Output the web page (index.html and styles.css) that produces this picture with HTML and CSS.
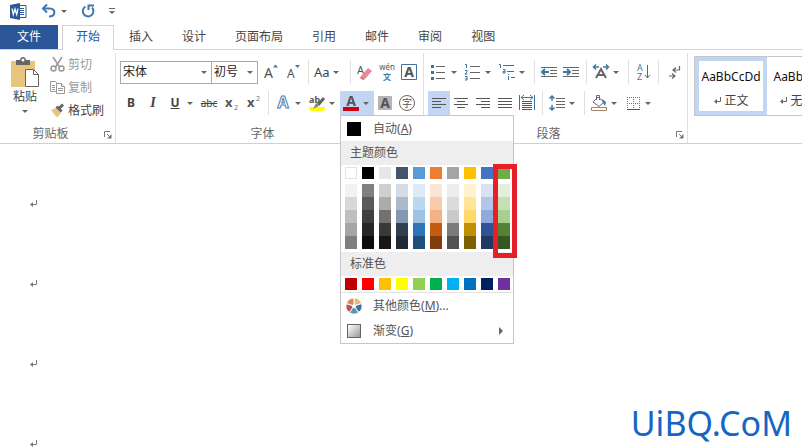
FILE: index.html
```html
<!DOCTYPE html>
<html lang="zh-CN">
<head>
    <meta charset="UTF-8">
    <meta name="viewport" content="width=device-width, initial-scale=1.0">
    <title>Word</title>
    <link rel="stylesheet" href="styles.css">
</head>
<body>
    <div class="quick-bar">
        <svg class="app-icon" width="17" height="17" viewBox="0 0 17 17">
            <path d="M9 2.5h7v12H9z" fill="#fff" stroke="#2b579a"/>
            <path d="M10 5.5h4M10 7.5h4M10 9.5h4M10 11.5h4" stroke="#2b579a"/>
            <path d="M0 2l10-2v17L0 15z" fill="#2b579a"/>
            <path d="M2 5.5l1.3 6L5 6l1.7 5.5 1.3-6" fill="none" stroke="#fff" stroke-width="1.3"/>
        </svg>
        <button class="quick-btn" aria-label="撤消">
            <svg width="16" height="14" viewBox="0 0 16 14">
                <path d="M2 4.5h7c6 0 6 8-1 8" fill="none" stroke="#3f78b0" stroke-width="2"/>
                <path d="M6 .5l-4 4 4 4" fill="none" stroke="#3f78b0" stroke-width="2"/>
            </svg>
            <span class="caret"></span>
        </button>
        <button class="quick-btn" aria-label="重复">
            <svg width="14" height="14" viewBox="0 0 14 14">
                <path d="M4.5 2.5A5.3 5.3 0 1 0 11 3.5" fill="none" stroke="#3f78b0" stroke-width="2"/>
                <path d="M7.5 6V1.5H13" fill="none" stroke="#3f78b0" stroke-width="2"/>
            </svg>
        </button>
        <button class="quick-btn" aria-label="自定义快速访问工具栏">
            <svg width="6" height="7" viewBox="0 0 6 7"><path d="M0 .5h6" stroke="#666"/><path d="M0 3h6L3 6z" fill="#666"/></svg>
        </button>
    </div>

    <nav class="tabs">
        <a class="tab tab-file" href="#">文件</a>
        <a class="tab tab-active" href="#">开始</a>
        <a class="tab" href="#">插入</a>
        <a class="tab" href="#">设计</a>
        <a class="tab" href="#">页面布局</a>
        <a class="tab" href="#">引用</a>
        <a class="tab" href="#">邮件</a>
        <a class="tab" href="#">审阅</a>
        <a class="tab" href="#">视图</a>
    </nav>

    <div class="ribbon">
        <!-- 剪贴板 -->
        <section class="group">
            <div class="clipboard">
                <button class="paste">
                    <svg width="30" height="32" viewBox="0 0 30 32">
                        <path d="M1 4h24v26H1z" fill="#e9c47c"/>
                        <path d="M6 3h4c0-4 6-4 6 0h4v5H6z" fill="#666"/>
                        <circle cx="13" cy="3" r="1.5" fill="#fff"/>
                        <path d="M15.5 12.5h8l5 5v12h-13z" fill="#fff" stroke="#666"/>
                        <path d="M23.5 12.5v5h5" fill="none" stroke="#666"/>
                    </svg>
                    <span>粘贴</span>
                    <span class="caret"></span>
                </button>
                <div class="clip-list">
                    <button class="clip-btn" disabled>
                        <svg width="15" height="15" viewBox="0 0 15 15" fill="none" stroke="#999" stroke-width="1.5">
                            <path d="M3 0l6.5 10M12 0L5.5 10"/>
                            <circle cx="3.5" cy="11.5" r="2.5"/><circle cx="11.5" cy="11.5" r="2.5"/>
                        </svg>
                        剪切
                    </button>
                    <button class="clip-btn" disabled>
                        <svg width="15" height="15" viewBox="0 0 15 15" fill="#fff" stroke="#999">
                            <path d="M.5 1.5h5l3 3v7h-8z"/>
                            <path d="M2 5.5h3M2 7.5h3M2 9.5h3"/>
                            <path d="M6.5 3.5h5l3 3v7h-8z"/>
                            <path d="M11.5 3.5v3h3M8 8.5h5M8 10.5h5"/>
                        </svg>
                        复制
                    </button>
                    <button class="clip-btn">
                        <svg width="15" height="15" viewBox="0 0 15 15">
                            <path d="M1 7l5-2 5 5-4 4.5z" fill="#e9c47c"/>
                            <path d="M5.5 4.5l2-2 5 5-2 2z" fill="#666"/>
                            <path d="M9.5 5L13 1.5" stroke="#666" stroke-width="3"/>
                        </svg>
                        格式刷
                    </button>
                </div>
            </div>
            <div class="group-label">
                <span>剪贴板</span>
                <button class="launcher" aria-label="剪贴板设置"><svg width="8" height="8" viewBox="0 0 8 8"><path d="M.5 6V.5H6M3 3l3 3" fill="none" stroke="#777"/><path d="M7.5 3v4.5H3z" fill="#777"/></svg></button>
            </div>
        </section>

        <!-- 字体 -->
        <section class="group">
            <div class="tool-rows">
                <div class="tool-row">
                    <div class="combos">
                        <span class="combo combo-font"><select aria-label="字体"><option>宋体</option></select></span>
                        <span class="combo combo-size"><select aria-label="字号"><option>初号</option></select></span>
                    </div>
                    <button class="tool" aria-label="增大字号"><svg class="ico" viewBox="0 0 18 18"><text x="2" y="15" font-size="14">A</text><path d="M11 4.5h5l-2.5-3z" fill="#3f78a0"/></svg></button>
                    <button class="tool" aria-label="减小字号"><svg class="ico" viewBox="0 0 18 18"><text x="3" y="15" font-size="12">A</text><path d="M11 2h5l-2.5 3z" fill="#3f78a0"/></svg></button>
                    <span class="sep"></span>
                    <button class="tool split text-tool"><span>Aa</span><span class="caret"></span></button>
                    <span class="sep"></span>
                    <button class="tool" aria-label="清除格式">
                        <svg class="ico" viewBox="0 0 18 18"><text x="1" y="11" font-size="11">A</text><path d="M5 13l7-8 4 3-7 8z" fill="#e58a98"/><path d="M5 13l4 3-2 1-3-2z" fill="#d46a7c"/></svg>
                    </button>
                    <button class="tool" aria-label="拼音指南"><svg class="ico" viewBox="0 0 18 18"><text x="9" y="7" font-size="8" text-anchor="middle">wén</text><text class="blue bold" x="9" y="17" font-size="8" text-anchor="middle">文</text></svg></button>
                    <button class="tool" aria-label="字符边框"><svg class="ico" viewBox="0 0 18 18"><path d="M1.5 1.5h15v15h-15z" fill="none" stroke="#41719c"/><text class="bold" x="9" y="14" font-size="14" text-anchor="middle">A</text></svg></button>
                </div>
                <div class="tool-row">
                    <button class="tool bold">B</button>
                    <button class="tool italic">I</button>
                    <button class="tool split bold"><u>U</u><span class="caret"></span></button>
                    <button class="tool strike">abc</button>
                    <button class="tool" aria-label="下标"><svg class="ico" viewBox="0 0 18 18"><text class="bold" x="3" y="13" font-size="13">x</text><text class="blue" x="12" y="16" font-size="7">2</text></svg></button>
                    <button class="tool" aria-label="上标"><svg class="ico" viewBox="0 0 18 18"><text class="bold" x="3" y="13" font-size="13">x</text><text class="blue" x="12" y="7" font-size="7">2</text></svg></button>
                    <span class="sep"></span>
                    <button class="tool split" aria-label="文本效果"><svg class="ico" viewBox="0 0 18 18"><text class="glow" x="9" y="14" font-size="16" text-anchor="middle">A</text></svg><span class="caret"></span></button>
                    <button class="tool split" aria-label="突出显示"><svg class="ico" viewBox="0 0 18 18"><path d="M1 13h16v2l-2 2H3l-2-2z" fill="#ffff00"/><text class="bold" x="1" y="9" font-size="9">ab</text><path d="M16 4l-6 7" stroke="#666" stroke-width="3"/><path d="M8 9l3 3-6 3z" fill="#888"/></svg><span class="caret"></span></button>
                    <div class="menu-host">
                        <button class="tool split pressed" aria-label="字体颜色"><svg class="ico" viewBox="0 0 18 18"><text class="bold" x="9" y="12" font-size="14" text-anchor="middle">A</text><path d="M1 13h16v4H1z" fill="#d0000c"/></svg><span class="caret"></span></button>
                        <div class="menu">
                            <button class="menu-item"><span class="auto-color"></span><span>自动(<u>A</u>)</span></button>
                            <div class="menu-title">主题颜色</div>
                            <div class="swatches" id="theme-colors"></div>
                            <div class="swatches shades" id="theme-shades"></div>
                            <div class="menu-title">标准色</div>
                            <div class="swatches standard" id="standard-colors"></div>
                            <button class="menu-item">
                                <svg width="16" height="16" viewBox="0 0 16 16" stroke="#fff">
                                    <path d="M8 8V0a8 8 0 0 1 7.6 5.5z" fill="#ecb87c"/>
                                    <path d="M8 8l7.6-2.5a8 8 0 0 1-2.9 9z" fill="#41719c"/>
                                    <path d="M8 8l4.7 6.5a8 8 0 0 1-9.4 0z" fill="#5b9aa8"/>
                                    <path d="M8 8l-4.7 6.5a8 8 0 0 1-2.9-9z" fill="#b5535a"/>
                                    <path d="M8 8L.4 5.5A8 8 0 0 1 8 0z" fill="#dc8a5c"/>
                                    <circle cx="8" cy="8" r="1.5" fill="#fff"/>
                                </svg>
                                <span>其他颜色(<u>M</u>)...</span>
                            </button>
                            <button class="menu-item"><span class="gradient-icon"></span><span>渐变(<u>G</u>)</span><span class="submenu-arrow"></span></button>
                            <div class="marker"></div>
                        </div>
                    </div>
                    <button class="tool" aria-label="字符底纹"><svg class="ico" viewBox="0 0 18 18"><path d="M2 2h14v14H2z" fill="#b4b4b4"/><text class="bold" x="9" y="14" font-size="14" text-anchor="middle">A</text></svg></button>
                    <button class="tool" aria-label="带圈字符"><svg class="ico" viewBox="0 0 18 18"><circle cx="9" cy="9" r="7.5" fill="none" stroke="#666"/><text x="9" y="13" font-size="10" text-anchor="middle">字</text></svg></button>
                </div>
            </div>
            <div class="group-label">
                <span>字体</span>
                <button class="launcher" aria-label="字体设置"><svg width="8" height="8" viewBox="0 0 8 8"><path d="M.5 6V.5H6M3 3l3 3" fill="none" stroke="#777"/><path d="M7.5 3v4.5H3z" fill="#777"/></svg></button>
            </div>
        </section>

        <!-- 段落 -->
        <section class="group">
            <div class="tool-rows">
                <div class="tool-row">
                    <button class="tool split" aria-label="项目符号"><svg class="ico" viewBox="0 0 18 18"><path d="M6 3.5h9M6 9.5h9M6 15.5h9" stroke="#666"/><path d="M1 2h3v3H1zM1 8h3v3H1zM1 14h3v3H1z" fill="#41719c"/></svg><span class="caret"></span></button>
                    <button class="tool split" aria-label="编号"><svg class="ico" viewBox="0 0 18 18"><path d="M6 3.5h10M6 9.5h10M6 15.5h10" stroke="#666"/><path d="M1 1.5h1.5V5M1 7.5h2V9l-2 2h2.5M1 13.5h2V17H1M1.5 15.5H3" fill="none" stroke="#41719c"/></svg><span class="caret"></span></button>
                    <button class="tool split" aria-label="多级列表"><svg class="ico" viewBox="0 0 18 18"><path d="M5 2.5h11M9 8.5h7M13 14.5h4" stroke="#666"/><path d="M1 1.5h1.5V5M5 6.5h2V10H5V8.5h2" fill="none" stroke="#41719c"/><path d="M10.5 11v1M10.5 13v4" stroke="#41719c"/></svg><span class="caret"></span></button>
                    <span class="sep"></span>
                    <button class="tool" aria-label="减少缩进量"><svg class="ico" viewBox="0 0 18 18"><path d="M1 4.5h16M10 7.5h7M10 10.5h7M1 13.5h16" stroke="#666"/><path d="M9 9H2M5 6L2 9l3 3" fill="none" stroke="#3f78a0" stroke-width="2"/></svg></button>
                    <button class="tool" aria-label="增加缩进量"><svg class="ico" viewBox="0 0 18 18"><path d="M1 4.5h16M10 7.5h7M10 10.5h7M1 13.5h16" stroke="#666"/><path d="M1 9h7M5 6l3 3-3 3" fill="none" stroke="#3f78a0" stroke-width="2"/></svg></button>
                    <span class="sep"></span>
                    <button class="tool split" aria-label="中文版式"><svg class="ico" viewBox="0 0 18 18"><path d="M4 15L9 6l5 9M6 12h6" fill="none" stroke="#666" stroke-width="2"/><path d="M7 4H2M4 1.5L1.5 4 4 6.5M11 4h5M14 1.5L16.5 4 14 6.5" fill="none" stroke="#3f78a0" stroke-width="1.5"/></svg><span class="caret"></span></button>
                    <span class="sep"></span>
                    <button class="tool" aria-label="排序"><svg class="ico" viewBox="0 0 18 18"><text class="blue" x="3" y="8" font-size="9">A</text><text class="purple" x="3" y="17" font-size="9">Z</text><path d="M13.5 2v13M11 12l2.5 3 2.5-3" fill="none" stroke="#666"/></svg></button>
                    <span class="sep"></span>
                    <button class="tool" aria-label="显示编辑标记"><svg class="ico" viewBox="0 0 18 18"><path d="M15.5 3v4H9M12 4.5L9 7l3 2.5M5 13h6M8 10.5l3 2.5-3 2.5" fill="none" stroke="#666" stroke-width="1.2"/></svg></button>
                </div>
                <div class="tool-row">
                    <button class="tool pressed" aria-label="左对齐"><svg class="ico" viewBox="0 0 18 18"><path d="M2 4.5h14M2 7.5h9M2 10.5h14M2 13.5h9" stroke="#555"/></svg></button>
                    <button class="tool" aria-label="居中"><svg class="ico" viewBox="0 0 18 18"><path d="M2 4.5h14M5 7.5h8M2 10.5h14M5 13.5h8" stroke="#555"/></svg></button>
                    <button class="tool" aria-label="右对齐"><svg class="ico" viewBox="0 0 18 18"><path d="M2 4.5h14M7 7.5h9M2 10.5h14M7 13.5h9" stroke="#555"/></svg></button>
                    <button class="tool" aria-label="两端对齐"><svg class="ico" viewBox="0 0 18 18"><path d="M2 4.5h14M2 7.5h14M2 10.5h14M2 13.5h14" stroke="#555"/></svg></button>
                    <button class="tool" aria-label="分散对齐"><svg class="ico" viewBox="0 0 18 18"><path d="M1.5 1v15M16.5 1v15" stroke="#41719c"/><path d="M3 3.5h12M6 1L3 3.5 6 6M12 1l3 2.5L12 6" fill="none" stroke="#3f78a0"/><path d="M4 7.5h10M4 9.5h10M4 11.5h10M4 13.5h10M4 15.5h10" stroke="#555"/></svg></button>
                    <span class="sep"></span>
                    <button class="tool split" aria-label="行距"><svg class="ico" viewBox="0 0 18 18"><path d="M8 4.5h9M8 7.5h9M8 10.5h9M8 13.5h9" stroke="#666"/><path d="M4 2v5M1.5 4.5L4 2l2.5 2.5M4 11v5M1.5 13.5L4 16l2.5-2.5" fill="none" stroke="#3f78a0" stroke-width="1.5"/></svg><span class="caret"></span></button>
                    <span class="sep"></span>
                    <button class="tool split" aria-label="底纹"><svg class="ico" viewBox="0 0 18 18"><path d="M1.5 13.5h15v3h-15z" fill="#fff" stroke="#a08468"/><path d="M3 8l5-5 6 5-5 4.5z" fill="#fff" stroke="#666"/><path d="M6.5 6V1.5h3V6" fill="none" stroke="#7c5c9c"/><path d="M12 5l4 3-1 4-2-3z" fill="#3f78a0"/></svg><span class="caret"></span></button>
                    <button class="tool split" aria-label="边框"><svg class="ico" viewBox="0 0 18 18"><path d="M3 3.5h13M3 9.5h13M3.5 3v13M9.5 3v13M15.5 3v13" stroke="#777" stroke-dasharray="1 1"/><path d="M3 15.5h13" stroke="#555"/></svg><span class="caret"></span></button>
                </div>
            </div>
            <div class="group-label">
                <span>段落</span>
                <button class="launcher" aria-label="段落设置"><svg width="8" height="8" viewBox="0 0 8 8"><path d="M.5 6V.5H6M3 3l3 3" fill="none" stroke="#777"/><path d="M7.5 3v4.5H3z" fill="#777"/></svg></button>
            </div>
        </section>

        <!-- 样式 -->
        <section class="styles">
            <div class="gallery">
                <button class="style-card style-active">
                    <span class="style-sample">AaBbCcDd</span>
                    <span class="style-name"><svg width="8" height="8" viewBox="0 0 8 8"><path d="M6.5 0v4.5H2" fill="none" stroke="#666"/><path d="M0 4.5L3 2v5z" fill="#666"/></svg>正文</span>
                </button>
                <button class="style-card">
                    <span class="style-sample">AaBbCcDd</span>
                    <span class="style-name"><svg width="8" height="8" viewBox="0 0 8 8"><path d="M6.5 0v4.5H2" fill="none" stroke="#666"/><path d="M0 4.5L3 2v5z" fill="#666"/></svg>无间隔</span>
                </button>
            </div>
        </section>
    </div>

    <main class="document">
        <p class="para"><svg width="8" height="8" viewBox="0 0 8 8"><path d="M6.5 0v4.5H2" fill="none" stroke="#777"/><path d="M0 4.5L3 2v5z" fill="#777"/></svg></p>
        <p class="para"><svg width="8" height="8" viewBox="0 0 8 8"><path d="M6.5 0v4.5H2" fill="none" stroke="#777"/><path d="M0 4.5L3 2v5z" fill="#777"/></svg></p>
        <p class="para"><svg width="8" height="8" viewBox="0 0 8 8"><path d="M6.5 0v4.5H2" fill="none" stroke="#777"/><path d="M0 4.5L3 2v5z" fill="#777"/></svg></p>
        <p class="para"><svg width="8" height="8" viewBox="0 0 8 8"><path d="M6.5 0v4.5H2" fill="none" stroke="#777"/><path d="M0 4.5L3 2v5z" fill="#777"/></svg></p>
    </main>
    <div class="watermark">UiBQ.CoM</div>

    <script src="script.js"></script>
</body>
</html>
```

FILE: styles.css
```css
* {
    box-sizing: border-box;
}
body {
    position: relative;
    margin: 0;
    height: 100vh;
    overflow: hidden;
    display: flex;
    flex-direction: column;
    background: #fff;
    color: #444;
    font-family: "Noto Sans", "Noto Sans CJK SC", sans-serif;
    font-size: 12px;
    line-height: 16px;
}
button {
    padding: 0;
    border: none;
    background: none;
    color: inherit;
    font: inherit;
}
svg {
    display: block;
    flex: none;
    overflow: visible;
}
.caret {
    flex: none;
    border: 3px solid transparent;
    border-top-color: #666;
    border-bottom: none;
}

/* 快速访问工具栏 */
.quick-bar {
    display: flex;
    flex: none;
    align-items: center;
    gap: 14px;
    height: 25px;
    padding: 0 10px 3px;
}
.quick-btn {
    display: flex;
    align-items: center;
    gap: 4px;
}

/* 选项卡 */
.tabs {
    display: flex;
    flex: none;
    gap: 1px;
    height: 25px;
    border-bottom: 1px solid #d4d4d4;
}
.tab {
    padding: 0 14px;
    color: #444;
    line-height: 24px;
    text-decoration: none;
    white-space: nowrap;
}
.tab-file {
    margin-right: 3px;
    padding: 0 17px;
    background: #2b579a;
    color: #fff;
}
.tab-active {
    margin-bottom: -1px;
    padding: 0 13px;
    border: 1px solid #d4d4d4;
    border-bottom: none;
    background: #fff;
    color: #2b579a;
    line-height: 22px;
}

/* 功能区 */
.ribbon {
    display: flex;
    flex: none;
    height: 94px;
    padding-top: 3px;
    border-bottom: 1px solid #d0d0d0;
}
.group {
    display: flex;
    flex: none;
    flex-direction: column;
    justify-content: space-between;
    border-right: 1px solid #e0e0e0;
}
.group-label {
    display: flex;
    align-items: center;
    height: 18px;
    padding-right: 3px;
    color: #666;
}
.group-label span {
    flex: 1;
    text-align: center;
}
.launcher {
    padding: 2px 0 0 3px;
}

.clipboard {
    display: flex;
    gap: 10px;
    padding: 0 11px 0 10px;
}
.paste {
    display: flex;
    flex-direction: column;
    align-items: center;
    padding-top: 4px;
}
.paste .caret {
    margin-top: 5px;
}
.clip-list {
    display: flex;
    flex-direction: column;
}
.clip-btn {
    display: flex;
    align-items: center;
    gap: 3px;
    height: 23px;
    white-space: nowrap;
}
.clip-btn:disabled {
    color: #999;
}

.tool-rows {
    display: flex;
    flex-direction: column;
    gap: 7px;
    padding: 7px 3px 0 4px;
}
.tool-row {
    display: flex;
    height: 24px;
}
.tool {
    display: flex;
    flex: none;
    align-items: center;
    justify-content: center;
    width: 22px;
}
.split {
    justify-content: flex-start;
    width: 34px;
    height: 24px;
    padding-left: 2px;
    gap: 3px;
}
.split u {
    width: 18px;
    text-align: center;
}
.tool:hover,
.pressed {
    background: #c2d5f2;
}
.ico {
    width: 18px;
    height: 18px;
}
.ico text {
    fill: #555;
}
.ico .blue {
    fill: #3f78a0;
}
.ico .purple {
    fill: #80569c;
}
.ico .bold,
.bold {
    font-weight: bold;
}
.ico .glow {
    fill: #fff;
    stroke: #4a7db5;
    font-weight: bold;
}
.text-tool {
    font-size: 13px;
}
.italic {
    font-family: "Liberation Serif", serif;
    font-size: 14px;
    font-style: italic;
    font-weight: bold;
}
.strike {
    font-size: 10px;
    text-decoration: line-through;
}
.sep {
    width: 8px;
    background: linear-gradient(#e0e0e0, #e0e0e0) center / 1px 100% no-repeat;
}

.combos {
    display: flex;
    align-items: center;
    padding-right: 2px;
}
.combo {
    position: relative;
    height: 23px;
    border: 1px solid #ababab;
}
.combo-font {
    width: 92px;
}
.combo-size {
    width: 47px;
    margin-left: -1px;
}
.combo select {
    width: 100%;
    height: 100%;
    padding: 0 2px;
    border: none;
    background: none;
    color: #222;
    font: inherit;
    appearance: none;
}
.combo::after {
    content: "";
    position: absolute;
    top: 9px;
    right: 4px;
    border: 3px solid transparent;
    border-top-color: #666;
    border-bottom: none;
    pointer-events: none;
}

/* 字体颜色菜单 */
.menu-host {
    position: relative;
}
.menu {
    position: absolute;
    top: 24px;
    left: 0;
    z-index: 10;
    width: 174px;
    border: 1px solid #c6c6c6;
    background: #fff;
}
.menu-item {
    display: flex;
    align-items: center;
    gap: 11px;
    width: 100%;
    height: 25px;
    padding: 0 5px;
    color: #555;
    text-align: left;
}
.auto-color,
.gradient-icon {
    width: 14px;
    height: 14px;
    margin: 0 1px;
    background: #000;
}
.gradient-icon {
    border: 1px solid #666;
    background: linear-gradient(135deg, #fff, #999);
}
.submenu-arrow {
    margin: 0 5px 0 auto;
    border: 4px solid transparent;
    border-left: 4px solid #666;
    border-right: none;
}
.menu-title {
    padding: 0 9px;
    background: #eee;
    color: #555;
    line-height: 24px;
}
.swatches {
    display: grid;
    grid-template-columns: repeat(10, 12px);
    column-gap: 5px;
    padding: 2px 4px 0;
}
.shades {
    padding: 5px 4px 3px;
}
.standard {
    padding-bottom: 2px;
    border-bottom: 1px solid #e4e4e4;
}
.swatch {
    height: 12px;
}
.shades .swatch {
    height: 13px;
}
.swatch-light {
    border: 1px solid #e2e2e2;
}
.marker {
    position: absolute;
    top: 48px;
    right: -4px;
    width: 24px;
    height: 94px;
    border: 5px solid #e81e28;
    pointer-events: none;
}

/* 样式库 */
.styles {
    flex: 1;
    min-width: 0;
    padding: 3px 0 0 6px;
}
.gallery {
    display: flex;
    height: 60px;
    overflow: hidden;
    border: 1px solid #c6c6c6;
    border-right: none;
}
.style-card {
    flex: none;
    width: 72px;
    border: 4px solid transparent;
}
.style-active {
    border-color: #c2d5f2;
}
.style-sample {
    display: block;
    margin: 5px 0 8px;
    color: #111;
}
.style-name {
    display: flex;
    align-items: center;
    justify-content: center;
    gap: 3px;
    white-space: nowrap;
}

/* 文档 */
.document {
    flex: 1;
    min-height: 0;
    overflow: hidden;
    padding: 20px 30px 0;
}
.para {
    display: flex;
    align-items: center;
    height: 80px;
    margin: 0;
}
.watermark {
    position: absolute;
    right: 10px;
    bottom: 8px;
    color: #1565c4;
    font-size: 34px;
    line-height: 34px;
}
```

FILE: script.js
```js
const themeColors = ['#ffffff', '#000000', '#e7e6e6', '#44546a', '#5b9bd5', '#ed7d31', '#a5a5a5', '#ffc000', '#4472c4', '#70ad47'];

// 每行从浅到深
const themeShades = [
    ['#f2f2f2', '#7f7f7f', '#d0cece', '#d6dce4', '#deebf6', '#fbe5d5', '#ededed', '#fff2cc', '#d9e2f3', '#e2efd9'],
    ['#d8d8d8', '#595959', '#aeabab', '#adb9ca', '#bdd7ee', '#f7cbac', '#dbdbdb', '#fee599', '#b4c6e7', '#c5e0b3'],
    ['#bfbfbf', '#3f3f3f', '#757070', '#8496b0', '#9cc3e5', '#f4b183', '#c9c9c9', '#ffd965', '#8eaadb', '#a8d08d'],
    ['#a5a5a5', '#262626', '#3a3838', '#323f4f', '#2e75b5', '#c55a11', '#7b7b7b', '#bf9000', '#2f5496', '#538135'],
    ['#7f7f7f', '#0c0c0c', '#171616', '#222a35', '#1e4e79', '#833c0b', '#525252', '#7f6000', '#1f3864', '#375623']
];

const standardColors = ['#c00000', '#ff0000', '#ffc000', '#ffff00', '#92d050', '#00b050', '#00b0f0', '#0070c0', '#002060', '#7030a0'];

function renderSwatches(id, colors) {
    const box = document.getElementById(id);
    colors.forEach(color => {
        const swatch = document.createElement('button');
        swatch.className = color === '#ffffff' ? 'swatch swatch-light' : 'swatch';
        swatch.style.backgroundColor = color;
        swatch.setAttribute('aria-label', color);
        box.appendChild(swatch);
    });
}

renderSwatches('theme-colors', themeColors);
renderSwatches('theme-shades', themeShades.flat());
renderSwatches('standard-colors', standardColors);
```
